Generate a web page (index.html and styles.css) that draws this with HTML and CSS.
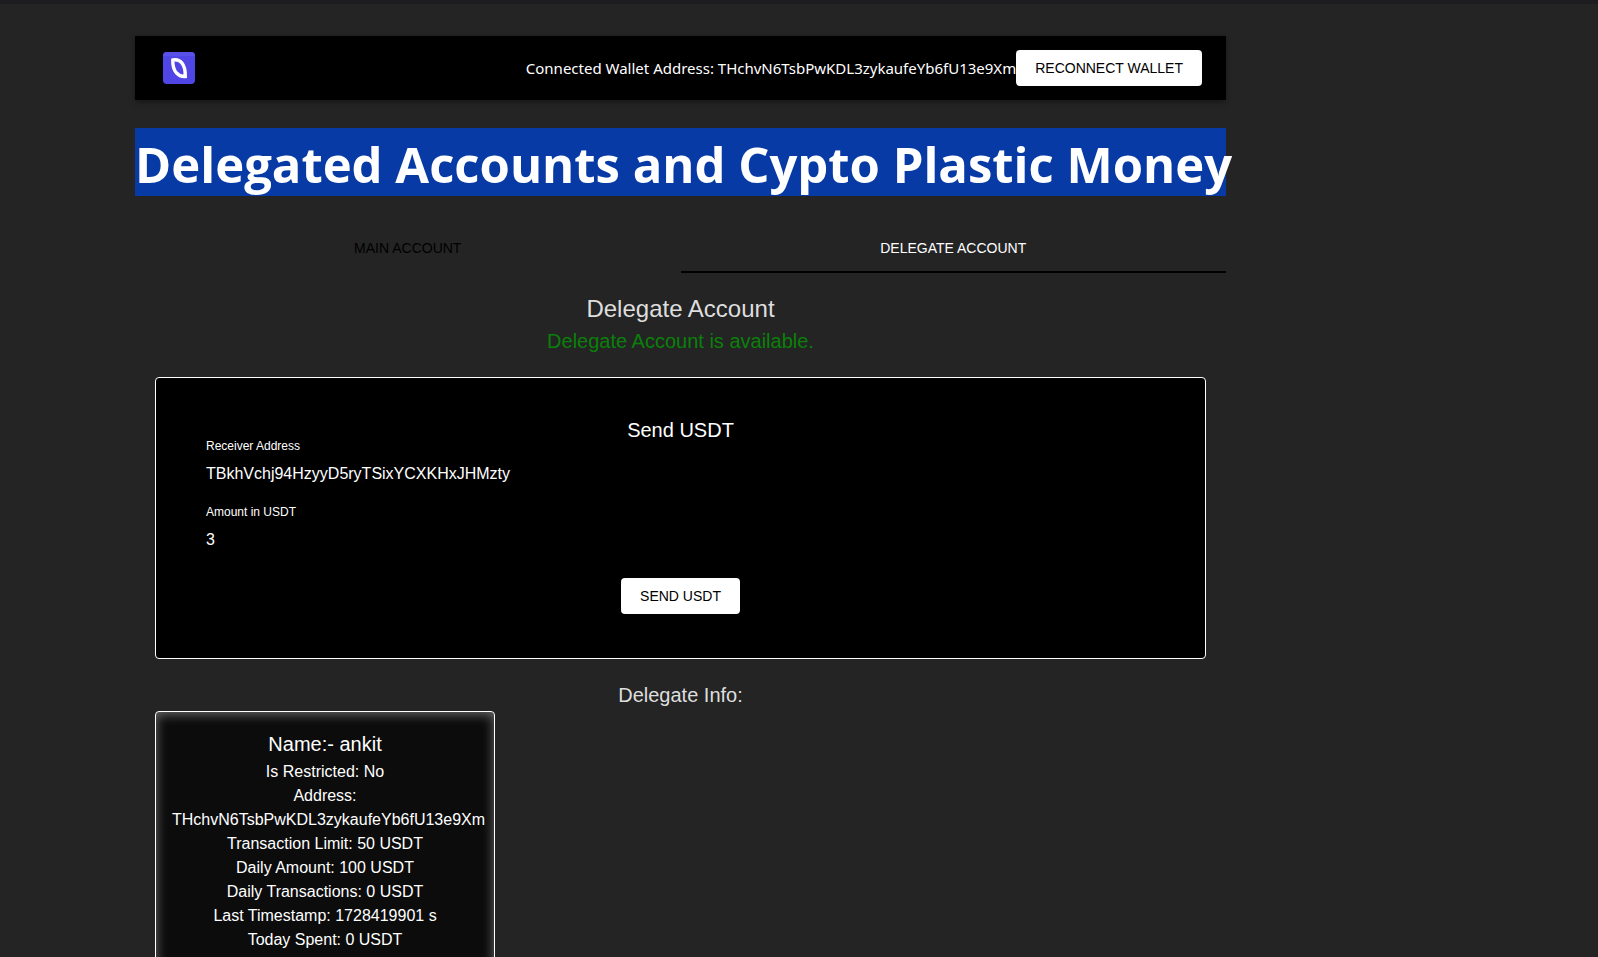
FILE: index.html
```
<!DOCTYPE html>
<html lang="en">
<head>
    <meta charset="UTF-8">
    <meta name="viewport" content="width=device-width, initial-scale=1.0">
    <title>Delegated Accounts</title>
    <link rel="stylesheet" href="styles.css">
</head>
<body>
    <div class="app">
        <header class="navbar">
            <svg class="logo" viewBox="0 0 32 32" role="img" aria-label="Logo">
                <rect width="32" height="32" rx="4" fill="#4f46e5"/>
                <path d="M0 4a4 4 0 0 1 4-4h24a4 4 0 0 1 4 4z" fill="#5950e8"/>
                <path d="M9.800 8C16.500 6.500 22.500 11 22.300 24.500C15.500 25 9.500 20 9.800 8z" fill="none" stroke="#fff" stroke-width="3.400"/>
            </svg>
            <div class="wallet">
                <span>Connected Wallet Address: THchvN6TsbPwKDL3zykaufeYb6fU13e9Xm</span>
                <button class="btn" type="button">Reconnect Wallet</button>
            </div>
        </header>

        <h1>Delegated Accounts and Cypto Plastic Money</h1>

        <div class="tabs" role="tablist">
            <button class="tab" type="button" role="tab" aria-selected="false">Main Account</button>
            <button class="tab active" type="button" role="tab" aria-selected="true">Delegate Account</button>
        </div>

        <main class="panel">
            <h2>Delegate Account</h2>
            <p class="status">Delegate Account is available.</p>

            <form class="send-box">
                <h3>Send USDT</h3>
                <div class="field">
                    <label for="receiver">Receiver Address</label>
                    <input id="receiver" type="text" value="TBkhVchj94HzyyD5ryTSixYCXKHxJHMzty" spellcheck="false">
                </div>
                <div class="field">
                    <label for="amount">Amount in USDT</label>
                    <input id="amount" type="text" inputmode="decimal" value="3">
                </div>
                <button class="btn" type="button">Send USDT</button>
            </form>

            <h4>Delegate Info:</h4>
            <div class="card">
                <h5>Name:- ankit</h5>
                <p>Is Restricted: No</p>
                <p>Address: THchvN6TsbPwKDL3zykaufeYb6fU13e9Xm</p>
                <p>Transaction Limit: 50 USDT</p>
                <p>Daily Amount: 100 USDT</p>
                <p>Daily Transactions: 0 USDT</p>
                <p>Last Timestamp: 1728419901 s</p>
                <p>Today Spent: 0 USDT</p>
            </div>
        </main>
    </div>
</body>
</html>
```
FILE: styles.css
```
* {
    box-sizing: border-box;
}
body {
    margin: 0;
    border-top: 4px solid #1c1c21;
    background: #242424;
    color: #dedede;
    font-family: "Liberation Sans", Arial, sans-serif;
    font-size: 16px;
    line-height: 24px;
}
h1, h2, h3, h4, h5, p {
    margin: 0;
    font-weight: 400;
}
.app {
    max-width: 1155px;
    margin-left: 103px;
    padding: 32px;
    text-align: center;
}
.navbar {
    display: flex;
    align-items: center;
    justify-content: space-between;
    height: 64px;
    padding: 0 24px 0 28px;
    background: #000;
    color: #fff;
    box-shadow: 0 2px 6px #0006;
}
.logo {
    width: 32px;
    height: 32px;
}
.wallet {
    display: flex;
    align-items: center;
    font-family: "Noto Sans", sans-serif;
    font-size: 15px;
}
.btn {
    height: 36px;
    padding: 0 19px;
    border: none;
    border-radius: 4px;
    background: #fff;
    color: #000;
    font-family: "Liberation Sans", Arial, sans-serif;
    font-size: 14px;
    text-transform: uppercase;
    cursor: pointer;
}
h1 {
    margin: 28px 0 29px;
    padding-top: 4px;
    background: #073aa5;
    color: #fff;
    font-family: "Open Sans", sans-serif;
    font-size: 49px;
    font-weight: 700;
    line-height: 64px;
    white-space: nowrap;
}
.tabs {
    display: flex;
}
.tab {
    flex: 1;
    height: 48px;
    padding: 0 16px;
    border: none;
    border-bottom: 2px solid transparent;
    background: none;
    color: #000;
    font-family: inherit;
    font-size: 14px;
    text-transform: uppercase;
    cursor: pointer;
}
.tab.active {
    border-color: #000;
    color: #fff;
}
.panel {
    padding: 20px;
}
h2 {
    font-size: 24px;
    line-height: 32px;
}
.status {
    color: #0a800a;
    font-size: 20px;
    line-height: 32px;
}
.send-box {
    margin: 20px 0;
    padding: 42px 50px 44px;
    border: 1px solid #fff;
    border-radius: 4px;
    background: #000;
    color: #fff;
}
h3 {
    font-size: 20px;
    line-height: 20px;
}
.field {
    display: flex;
    flex-direction: column;
    gap: 10px;
    margin-bottom: 20px;
    text-align: left;
}
.field label {
    font-size: 12px;
    line-height: 12px;
}
.field input {
    height: 24px;
    padding: 0;
    border: none;
    outline: none;
    background: none;
    color: #fff;
    font-family: inherit;
    font-size: 16px;
}
.send-box .btn {
    margin-top: 6px;
}
h4 {
    font-size: 20px;
    line-height: 32px;
}
.card {
    width: 340px;
    padding: 16px;
    border: 1px solid #fff;
    border-radius: 4px;
    background: #0c0c0c;
    color: #fff;
    box-shadow: inset 0 2px 12px #fff6;
}
h5 {
    font-size: 20px;
    line-height: 32px;
}
```
